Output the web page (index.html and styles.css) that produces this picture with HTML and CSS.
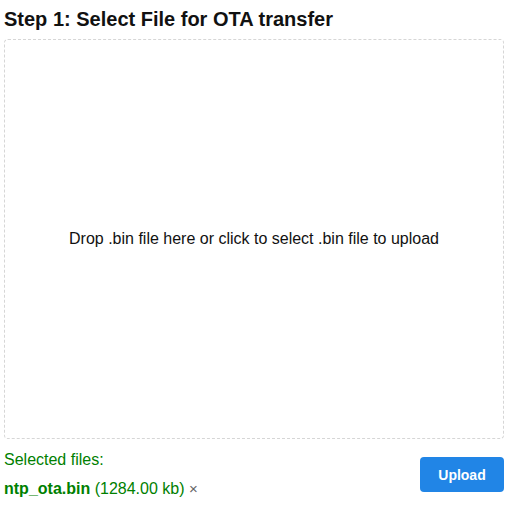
FILE: index.html
```html
<!DOCTYPE html>
<html>
<head>
<meta charset="utf-8">
<link rel="stylesheet" href="styles.css">
</head>
<body>
<div class="wrap">
  <h2 class="title">Step 1: Select File for OTA transfer</h2>
  <div class="dropzone">
    <p>Drop .bin file here or click to select .bin file to upload</p>
  </div>
  <div class="footer">
    <div class="files">
      <div class="label">Selected files:</div>
      <div class="file"><span class="name">ntp_ota.bin</span> (1284.00 kb) <span class="remove">×</span></div>
    </div>
    <button class="upload">Upload</button>
  </div>
</div>
</body>
</html>
```
FILE: styles.css
```css
html, body {
  margin: 0;
  padding: 0;
  background: #fff;
  font-family: "Liberation Sans", Arial, sans-serif;
}
.wrap {
  width: 500px;
  padding: 0 4px;
}
.title {
  margin: 0;
  padding: 7px 0 0 0;
  font-size: 20px;
  line-height: 24px;
  font-weight: bold;
  color: #111;
}
.dropzone {
  margin-top: 8px;
  height: 398px;
  border: 1px dashed #d6d6d6;
  border-radius: 4px;
  display: flex;
  align-items: center;
  justify-content: center;
}
.dropzone p {
  margin: 0;
  font-size: 16px;
  color: #111;
}
.footer {
  display: flex;
  justify-content: space-between;
  align-items: flex-start;
  margin-top: 11px;
}
.files {
  color: #008000;
  font-size: 16px;
  line-height: 20px;
}
.file {
  margin-top: 9px;
}
.name {
  font-weight: bold;
}
.remove {
  color: #666;
  font-size: 15px;
}
.upload {
  margin-top: 7px;
  width: 84px;
  height: 35px;
  border: none;
  border-radius: 4px;
  background: #2185e6;
  color: #fff;
  font-family: "Liberation Sans", Arial, sans-serif;
  font-weight: bold;
  font-size: 14px;
  padding: 0;
}
```
